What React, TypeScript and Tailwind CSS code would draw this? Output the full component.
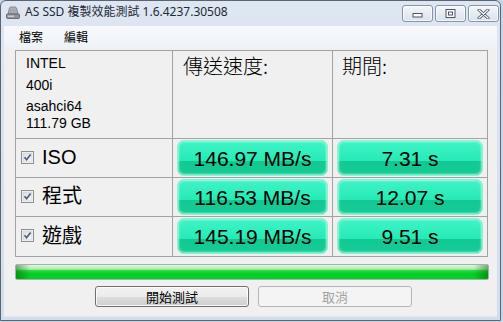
import React from "react";

const rows = [
  { name: "ISO", speed: "146.97 MB/s", time: "7.31 s" },
  { name: "程式", speed: "116.53 MB/s", time: "12.07 s" },
  { name: "遊戲", speed: "145.19 MB/s", time: "9.51 s" },
];

function DriveIcon() {
  return (
    <svg width="16" height="16" viewBox="0 0 16 16" aria-hidden>
      <path d="M3 9 L4.5 3 Q5 2 6 2 H10 Q11 2 11.5 3 L13 9 Z" fill="#b9bdc2" stroke="#6f757c" strokeWidth="0.8" />
      <path d="M5 4 H11 M4.6 5.6 H11.4 M4.2 7.2 H11.8" stroke="#8d9298" strokeWidth="0.7" />
      <rect x="1.5" y="9" width="13" height="4.5" rx="1" fill="#8f959b" stroke="#55595f" strokeWidth="0.8" />
      <rect x="3" y="10.6" width="6" height="1.2" fill="#d8dbde" />
    </svg>
  );
}

function CaptionButton({ kind }: { kind: "min" | "max" | "close" }) {
  return (
    <div className="w-[31px] h-[17px] rounded-[3px] border border-[#8494a9] bg-[linear-gradient(180deg,#f4f7fa_0%,#e6ecf3_50%,#d9e2ec_100%)] flex items-center justify-center shadow-[inset_0_0_0_1px_rgba(255,255,255,0.7)]">
      {kind === "min" && (
        <svg width="11" height="8" viewBox="0 0 11 8" aria-hidden>
          <rect x="1" y="3.5" width="9" height="3.5" fill="#fff" stroke="#4b5563" strokeWidth="1" />
        </svg>
      )}
      {kind === "max" && (
        <svg width="11" height="9" viewBox="0 0 11 9" aria-hidden>
          <rect x="1" y="0.5" width="9" height="8" fill="#fff" stroke="#4b5563" strokeWidth="1" />
          <rect x="3.5" y="3" width="4" height="3" fill="none" stroke="#4b5563" strokeWidth="1" />
        </svg>
      )}
      {kind === "close" && (
        <svg width="13" height="10" viewBox="0 0 13 10" aria-hidden>
          <path d="M2 1 L11 9 M11 1 L2 9" stroke="#4b5563" strokeWidth="3" strokeLinecap="round" />
          <path d="M2 1 L11 9 M11 1 L2 9" stroke="#fff" strokeWidth="1.2" strokeLinecap="round" />
        </svg>
      )}
    </div>
  );
}

function CheckBox() {
  return (
    <svg width="13" height="13" viewBox="0 0 13 13" aria-hidden className="shrink-0">
      <defs>
        <linearGradient id="cb" x1="0" y1="0" x2="1" y2="1">
          <stop offset="0" stopColor="#dcdcdc" />
          <stop offset="1" stopColor="#fbfbfb" />
        </linearGradient>
      </defs>
      <rect x="0.5" y="0.5" width="12" height="12" fill="#fff" stroke="#8e8f8f" />
      <rect x="2" y="2" width="9" height="9" fill="url(#cb)" stroke="#c4c4c4" strokeWidth="0.6" />
      <path d="M3.5 6.3 L5.6 8.7 L9.6 3.6" fill="none" stroke="#4a5b8f" strokeWidth="1.7" />
    </svg>
  );
}

function Meter({ value }: { value: string }) {
  return (
    <div className="mx-[4px] mt-[1px] h-[36px] rounded-[7px] border border-[#8af0ce] bg-[linear-gradient(180deg,#40f4c7_0%,#26eab6_58%,#13c893_60%,#15cc96_100%)] shadow-[inset_0_0_2px_1px_rgba(190,250,228,0.8)] flex items-center justify-center pt-[2px] text-[21px] text-black font-['Liberation_Sans',sans-serif]">
      {value}
    </div>
  );
}

export default function App() {
  return (
    <div className="w-[503px] h-[322px] bg-[#c6d6ea] overflow-hidden font-['Noto_Sans','Noto_Sans_CJK_TC',sans-serif]">
      <div className="w-[501px] h-[321px] rounded-t-[6px] border border-[#5b6572] bg-[linear-gradient(180deg,#dde6f1_0%,#d3deec_100%)] flex flex-col">
        {/* title bar */}
        <div className="h-[25px] flex items-start shrink-0">
          <div className="ml-[4px] mt-[4px]">
            <DriveIcon />
          </div>
          <div className="ml-[4px] mt-[3px] text-[12px] leading-[16px] text-[#1e2a36]">
            AS SSD 複製效能測試 1.6.4237.30508
          </div>
          <div className="ml-auto mr-[1px] mt-[4px] flex gap-[2px]">
            <CaptionButton kind="min" />
            <CaptionButton kind="max" />
            <CaptionButton kind="close" />
          </div>
        </div>

        {/* client area */}
        <div className="mx-[3px] flex-1 bg-[#f0f0f0] border-b border-[#e2e8f0] flex flex-col">
          <div className="h-[22px] bg-[linear-gradient(180deg,#f7f9fc_0%,#eef2f7_100%)] flex items-center text-[12px] text-black font-['Noto_Sans_CJK_TC',sans-serif]">
            <span className="ml-[15px]">檔案</span>
            <span className="ml-[21px]">編輯</span>
          </div>

          {/* results table */}
          <div className="ml-[11px] mt-[2px] w-[473px] grid grid-cols-[156px_159px_154px] grid-rows-[87px_38px_38px_39px] gap-px p-px bg-[#a3a3a3]">
            <div className="bg-[#f0f0f0] pl-[10px] pt-[4px] text-[14px] leading-[16px] text-black font-['Liberation_Sans',sans-serif]">
              <div>INTEL</div>
              <div className="mt-[6px]">400i</div>
              <div className="mt-[5px]">asahci64</div>
              <div className="mt-[1px]">111.79 GB</div>
            </div>
            <div className="bg-[#f0f0f0] pl-[10px] pt-[3px] text-[20px] leading-[24px] text-black font-light font-['Noto_Sans_CJK_TC',sans-serif]">
              傳送速度:
            </div>
            <div className="bg-[#f0f0f0] pl-[9px] pt-[3px] text-[20px] leading-[24px] text-black font-light font-['Noto_Sans_CJK_TC',sans-serif]">
              期間:
            </div>

            {rows.map((r) => (
              <React.Fragment key={r.name}>
                <div className="bg-[#f0f0f0] flex items-center pl-[5px] pb-[2px]">
                  <CheckBox />
                  <span className="ml-[8px] text-[20px] leading-[24px] text-black font-['Liberation_Sans','Noto_Sans_CJK_TC',sans-serif]">
                    {r.name}
                  </span>
                </div>
                <div className="bg-[#f0f0f0]">
                  <Meter value={r.speed} />
                </div>
                <div className="bg-[#f0f0f0]">
                  <Meter value={r.time} />
                </div>
              </React.Fragment>
            ))}
          </div>

          {/* progress bar */}
          <div className="ml-[11px] mt-[7px] w-[474px] h-[16px] rounded-[2px] border border-[#a8b0a8] bg-[linear-gradient(90deg,rgba(0,80,0,0.45)_0%,rgba(0,80,0,0)_3%,rgba(0,80,0,0)_97%,rgba(0,80,0,0.45)_100%),linear-gradient(180deg,#dff8df_0%,#a9eeaa_30%,#2ed844_40%,#00cc22_65%,#00d22a_100%)]" />

          {/* buttons */}
          <div className="mt-[6px] ml-[91px] flex gap-[9px] text-[13px] font-['Noto_Sans_CJK_TC',sans-serif]">
            <div className="w-[154px] h-[21px] rounded-[3px] border border-[#707070] bg-[linear-gradient(180deg,#f2f2f2_0%,#ebebeb_50%,#dddddd_51%,#cfcfcf_100%)] shadow-[inset_0_0_0_1px_rgba(255,255,255,0.8)] flex items-center justify-center text-black">
              開始測試
            </div>
            <div className="w-[154px] h-[21px] rounded-[3px] border border-[#b3b6b9] bg-[#f4f4f4] flex items-center justify-center text-[#a3a3a3]">
              取消
            </div>
          </div>
        </div>
        <div className="h-[3px] shrink-0" />
      </div>
    </div>
  );
}
